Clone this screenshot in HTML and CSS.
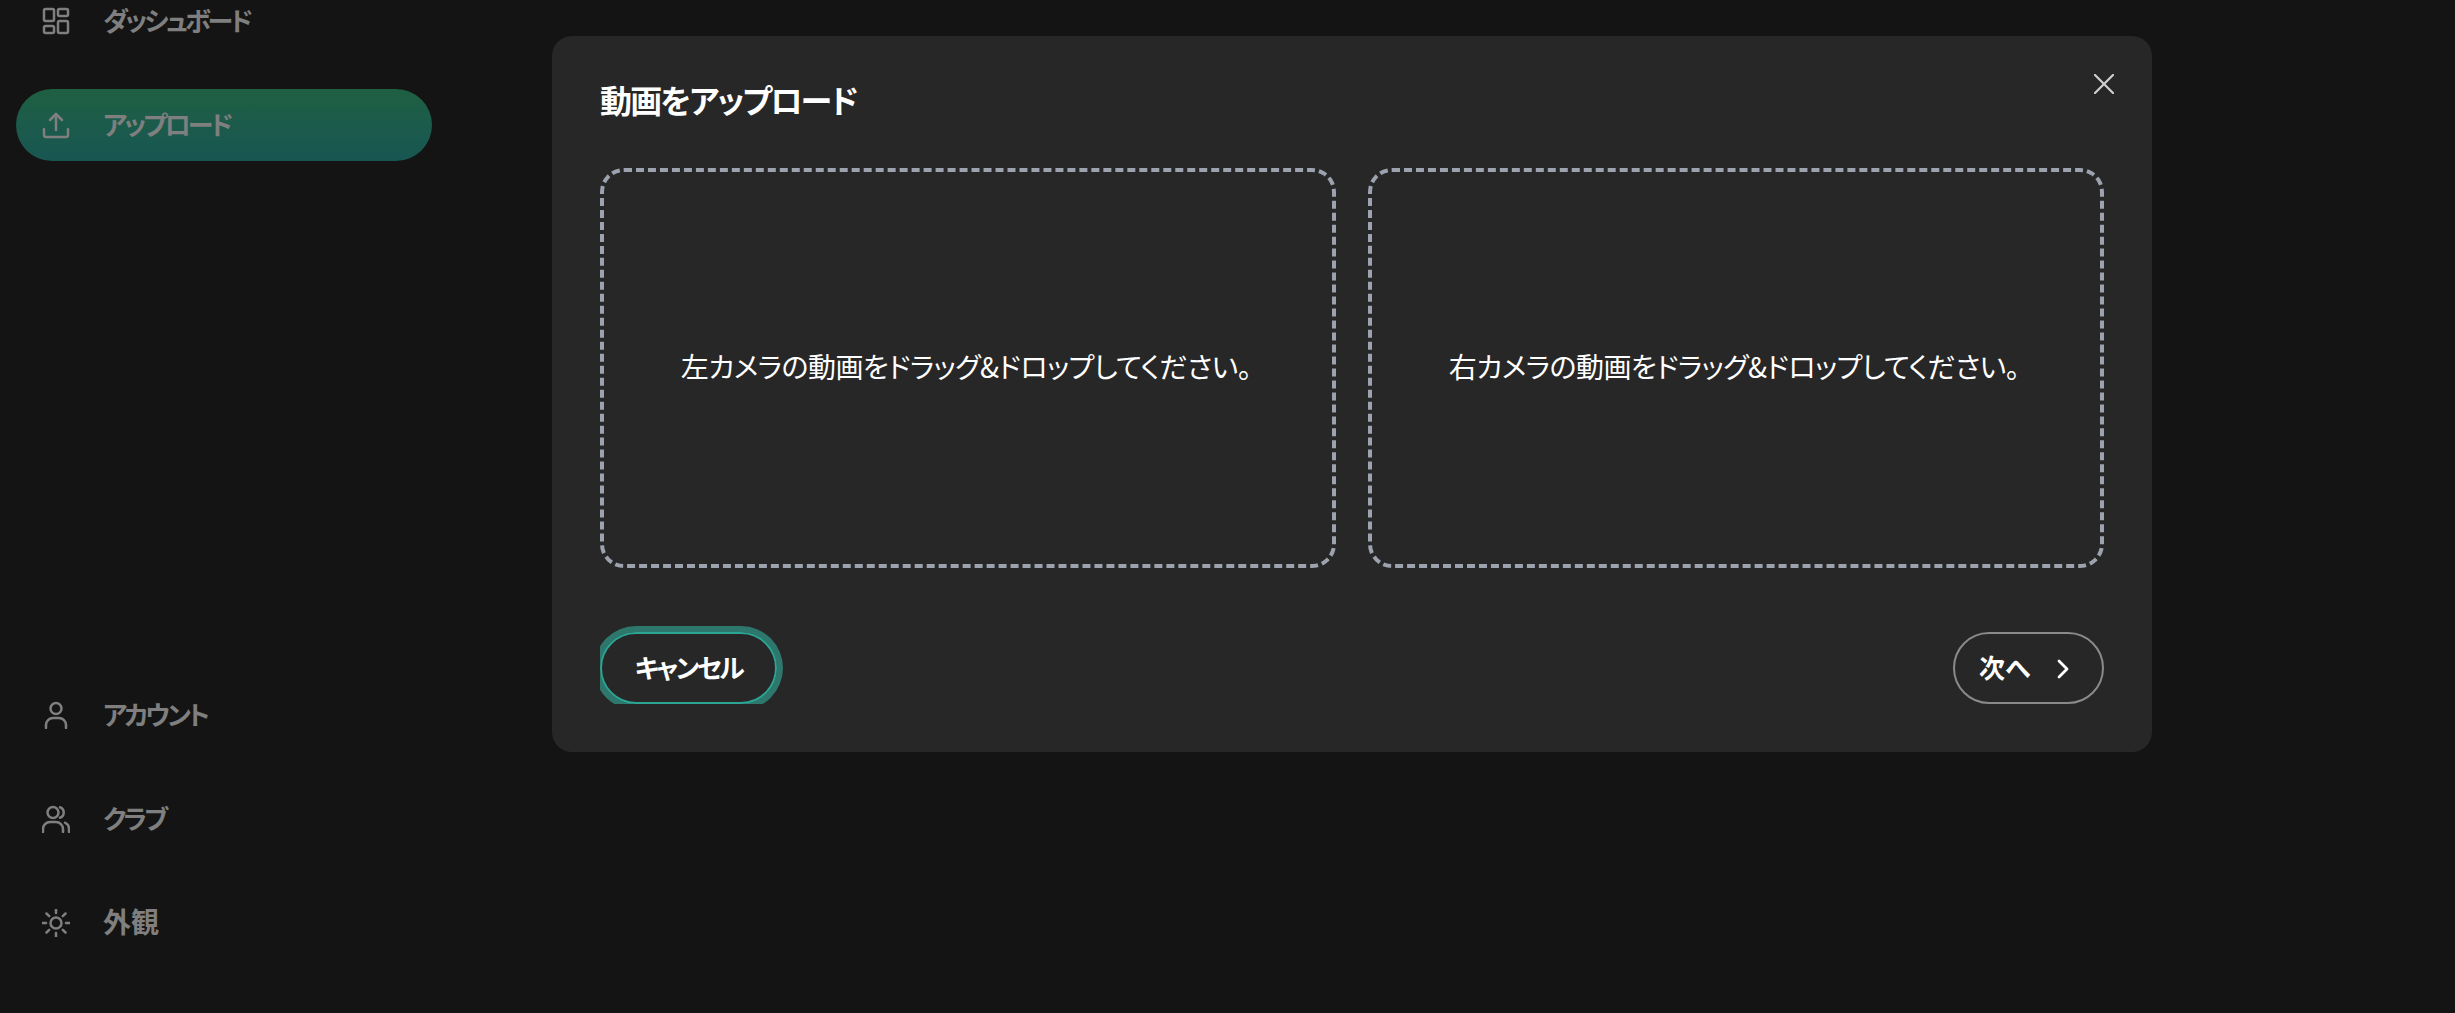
FILE: index.html
```html
<!DOCTYPE html>
<html lang="ja">
<head>
    <meta charset="UTF-8">
    <meta name="viewport" content="width=device-width, initial-scale=1.0">
    <title>動画をアップロード</title>
    <link rel="stylesheet" href="styles.css">
</head>
<body>

<nav class="sidebar">
    <div class="nav-group">
        <a class="nav-item" href="#">
            <svg class="nav-icon" viewBox="0 0 28 28"><rect x="2" y="2" width="10" height="12" rx="1.5"/><rect x="16" y="2" width="10" height="7" rx="1.5"/><rect x="2" y="19" width="10" height="7" rx="1.5"/><rect x="16" y="14" width="10" height="12" rx="1.5"/></svg>
            <span>ダッシュボード</span>
        </a>
        <a class="nav-item active" href="#">
            <svg class="nav-icon" viewBox="0 0 28 28"><path d="M2 18v6a2 2 0 0 0 2 2h20a2 2 0 0 0 2-2v-6"/><path d="M14 19V3"/><path d="M8 9l6-6 6 6"/></svg>
            <span>アップロード</span>
        </a>
    </div>
    <div class="nav-group">
        <a class="nav-item" href="#">
            <svg class="nav-icon" viewBox="0 0 28 28"><circle cx="14" cy="7.500" r="5.500"/><path d="M4 27v-3a7 7 0 0 1 7-7h6a7 7 0 0 1 7 7v3"/></svg>
            <span>アカウント</span>
        </a>
        <a class="nav-item" href="#">
            <svg class="nav-icon" viewBox="0 0 28 28"><circle cx="11" cy="7.500" r="5.500"/><path d="M1 27v-3a7 7 0 0 1 7-7h6a7 7 0 0 1 7 7v3"/><path d="M18 2.300a5.500 5.500 0 0 1 0 10.400"/><path d="M27 27v-3a7 7 0 0 0-4-6.300"/></svg>
            <span>クラブ</span>
        </a>
        <a class="nav-item" href="#">
            <svg class="nav-icon" viewBox="0 0 28 28"><circle cx="14" cy="14" r="5.500"/><path d="M14 0v4M14 24v4M0 14h4M24 14h4M4.500 4.500l2.700 2.700M20.800 20.800l2.700 2.700M4.500 23.500l2.700-2.700M20.800 7.200l2.700-2.700"/></svg>
            <span class="kanji">外観</span>
        </a>
    </div>
</nav>

<div class="overlay">
    <div class="modal">
        <button class="close-btn" aria-label="閉じる">
            <svg viewBox="0 0 20 20"><path d="M1 1l18 18M19 1L1 19"/></svg>
        </button>
        <h2 class="modal-title">動画をアップロード</h2>
        <div class="drop-row">
            <div class="drop-zone">左カメラの動画をドラッグ&amp;ドロップしてください。</div>
            <div class="drop-zone">右カメラの動画をドラッグ&amp;ドロップしてください。</div>
        </div>
        <div class="modal-footer">
            <div class="cancel-wrap">
                <button class="btn cancel-btn">キャンセル</button>
            </div>
            <button class="btn next-btn">
                次へ
                <svg viewBox="0 0 12 20"><path d="M2 2l8 8-8 8"/></svg>
            </button>
        </div>
    </div>
</div>

</body>
</html>
```
FILE: styles.css
```css
/* base */
html, body {
    height: 100%;
}
body {
    margin: 0;
    background-color: #141414;
    color: #fff;
    font-family: "Noto Sans CJK JP", "Noto Sans", sans-serif;
    font-feature-settings: "palt";
    overflow: hidden;
}

/* sidebar */
.sidebar {
    width: 448px;
    height: 1013px;
    box-sizing: border-box;
    padding: 0 16px 39px;
    margin-top: -15px;
    display: flex;
    flex-direction: column;
    justify-content: space-between;
}
.nav-group {
    display: flex;
    flex-direction: column;
    gap: 32px;
}
.nav-item {
    display: flex;
    align-items: center;
    gap: 33px;
    height: 72px;
    padding-left: 26px;
    border-radius: 36px;
    color: #7f7f7f;
    font-size: 26px;
    font-weight: 700;
    letter-spacing: -2.900px;
    text-decoration: none;
}
.nav-item span {
    margin-bottom: 4px;
}
.nav-item .kanji {
    font-size: 28px;
    letter-spacing: 0;
}
.nav-item.active {
    background: linear-gradient(180deg, #1f6043, #185652);
}
.nav-icon {
    width: 28px;
    height: 28px;
    flex-shrink: 0;
    fill: none;
    stroke: #7f7f7f;
    stroke-width: 2.500;
    stroke-linecap: round;
    stroke-linejoin: round;
}

/* modal */
.overlay {
    position: fixed;
    top: 0;
    left: 0;
    right: 0;
    bottom: 0;
    padding: 36px 0 0 552px;
}
.modal {
    position: relative;
    width: 1600px;
    height: 716px;
    box-sizing: border-box;
    padding: 48px;
    background-color: #272727;
    border-radius: 20px;
}
.modal-title {
    margin: 0 0 54px;
    height: 30px;
    line-height: 30px;
    font-size: 32px;
    font-weight: 700;
    letter-spacing: -1.800px;
}
.close-btn {
    position: absolute;
    top: 35px;
    right: 35px;
    width: 26px;
    height: 26px;
    padding: 3px;
    border: none;
    background: none;
}
.close-btn svg {
    display: block;
    fill: none;
    stroke: #d0d0d0;
    stroke-width: 2.200;
    stroke-linecap: square;
}
.drop-row {
    display: flex;
    gap: 32px;
}
.drop-zone {
    flex: 1;
    height: 400px;
    box-sizing: border-box;
    padding: 0 4px 4px 0;
    display: flex;
    align-items: center;
    justify-content: center;
    border: 4px dashed #9ca3af;
    border-radius: 24px;
    font-size: 28px;
    letter-spacing: -0.500px;
}
.modal-footer {
    display: flex;
    justify-content: space-between;
    margin-top: 64px;
}
.btn {
    height: 72px;
    box-sizing: border-box;
    padding-bottom: 4px;
    border-radius: 36px;
    background: none;
    color: #fff;
    font-family: inherit;
    font-feature-settings: inherit;
    font-size: 26px;
    font-weight: 700;
}
.cancel-wrap {
    height: 72px;
    overflow: hidden;
    padding: 6px 6px 0 0;
    margin-top: -6px;
}
.cancel-btn {
    display: block;
    width: 177px;
    height: 72px;
    border: 2px solid #2ca594;
    box-shadow: 0 0 0 6px #2e776c;
    letter-spacing: -2.500px;
}
.next-btn {
    display: flex;
    align-items: center;
    gap: 27px;
    width: 151px;
    padding-left: 24px;
    border: 2px solid #8a8a8a;
}
.next-btn svg {
    width: 12px;
    height: 20px;
    margin-top: 4px;
    fill: none;
    stroke: #fff;
    stroke-width: 2.800;
    stroke-linecap: round;
    stroke-linejoin: round;
}
```
